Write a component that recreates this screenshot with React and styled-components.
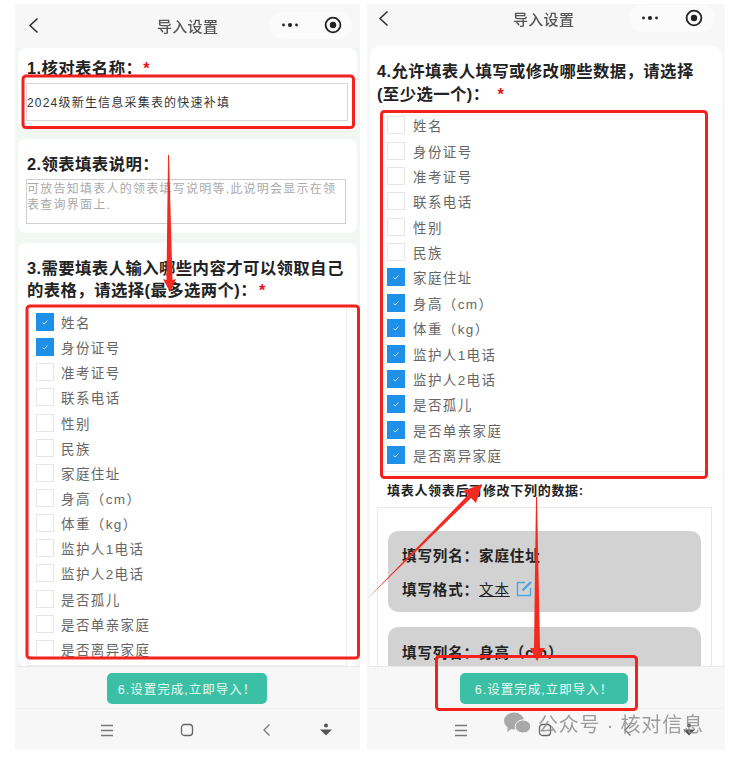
import React from 'react';
import styled, { createGlobalStyle } from 'styled-components';

const ALL_FIELDS = ['姓名', '身份证号', '准考证号', '联系电话', '性别', '民族', '家庭住址', '身高（cm）', '体重（kg）', '监护人1电话', '监护人2电话', '是否孤儿', '是否单亲家庭', '是否离异家庭'];

const Fields = ({ checked, rowH, indent, gap }) => (
  <>
    {ALL_FIELDS.map((name, i) => (
      <FieldRow key={name} $h={rowH} $indent={indent} $gap={gap}>
        <Box $on={checked.includes(i)}>
          {checked.includes(i) && (
            <svg width="8" height="8" viewBox="0 0 8 8" fill="none" stroke="#cfe8fb" strokeWidth="1">
              <path d="M1.5 4.5 L3.2 6 L6.5 2.5" />
            </svg>
          )}
        </Box>
        <FieldName>{name}</FieldName>
      </FieldRow>
    ))}
  </>
);

const TopBar = ({ $compact }) => (
  <Nav $compact={$compact}>
    <svg width="11" height="17" viewBox="0 0 11 17" fill="none" stroke="#333" strokeWidth="1.6">
      <path d="M9.5 1.5 L2 8.5 L9.5 15.5" />
    </svg>
    <NavTitle $compact={$compact}>导入设置</NavTitle>
    <Capsule $compact={$compact}>
      <svg width="18" height="6" viewBox="0 0 18 6" fill="#222">
        <circle cx="2.5" cy="3" r="1.4" />
        <circle cx="9" cy="3" r="2.1" />
        <circle cx="15.5" cy="3" r="1.4" />
      </svg>
      <svg width="18" height="18" viewBox="0 0 18 18">
        <circle cx="9" cy="9" r="7.4" fill="none" stroke="#222" strokeWidth="1.8" />
        <circle cx="9" cy="9" r="3.2" fill="#222" />
      </svg>
    </Capsule>
  </Nav>
);

const BottomBar = ({ $cols, $pad }) => (
  <Footer>
    <SubmitWrap $w={$pad === 'r' ? 168 : 160} $ml={$pad === 'r' ? 93 : 92}>
      <Submit>6.设置完成,立即导入！</Submit>
    </SubmitWrap>
    <SysBar $cols={$cols}>
      <svg width="14" height="13" viewBox="0 0 14 13" stroke="#777" strokeWidth="1.3">
        <path d="M1 1.5 H13 M1 6.5 H13 M1 11.5 H13" />
      </svg>
      <svg width="14" height="14" viewBox="0 0 14 14" fill="none" stroke="#666" strokeWidth="1.3">
        <rect x="1.5" y="1.5" width="11" height="11" rx="3" />
      </svg>
      <svg width="9" height="14" viewBox="0 0 9 14" fill="none" stroke="#777" strokeWidth="1.3">
        <path d="M7.5 1.5 L2 7 L7.5 12.5" />
      </svg>
      <svg width="14" height="14" viewBox="0 0 14 14" fill="#555">
        <circle cx="7" cy="2.6" r="2" />
        <path d="M1 6.5 H13 L7 12.5 Z" />
      </svg>
    </SysBar>
  </Footer>
);

const App = () => (
  <Page>
    <GlobalStyle />
    <Phone $w={345}>
      <TopBar />
      <Body $tint>
        <Card $pad="9px 9px 7px" $mb={11}>
          <Title>1.核对表名称：<Star $ml={1}>*</Star></Title>
          <NameInput>2024级新生信息采集表的快速补填</NameInput>
        </Card>
        <Card $pad="14px 9px 9px" $mb={10}>
          <Title>2.领表填表说明：</Title>
          <Notes>可放告知填表人的领表填写说明等,此说明会显示在领表查询界面上.</Notes>
        </Card>
        <Card $pad="14px 9px 0">
          <Title>3.需要填表人输入哪些内容才可以领取自己<br />的表格，请选择(最多选两个)：<Star $ml={2}>*</Star></Title>
          <FieldList $top={4} $padTop={3.5}>
            <Fields checked={[0, 1]} rowH={25.15} indent={8} gap={7} />
          </FieldList>
        </Card>
      </Body>
      <BottomBar $cols="99px 80px 76.5px 62.5px" />
    </Phone>

    <Phone $w={358} $ml={7}>
      <TopBar $compact />
      <Body>
        <WideCard>
          <Title $lh={23}>4.允许填表人填写或修改哪些数据，请选择<br />(至少选一个)：<Star $ml={8}>*</Star></Title>
          <FieldList $left={4} $width={326} $top={4} $padTop={1.5}>
            <Fields checked={[6, 7, 8, 9, 10, 11, 12, 13]} rowH={25.38} indent={5} gap={8} />
          </FieldList>
          <SubTitle>填表人领表后可修改下列的数据:</SubTitle>
          <EditBox>
            <ColumnCard>
              <ColumnLine>填写列名：家庭住址</ColumnLine>
              <ColumnLine>
                填写格式：<FormatLink>文本</FormatLink>
                <svg width="17" height="17" viewBox="0 0 17 17" fill="none" stroke="#4ba6dc" strokeWidth="1.4">
                  <path d="M9 2.5 H1.5 V15.5 H14.5 V8" />
                  <path d="M6.5 10.5 L15 2" strokeWidth="2.4" />
                </svg>
              </ColumnLine>
            </ColumnCard>
            <ColumnCard>
              <ColumnLine>填写列名：身高（cm）</ColumnLine>
            </ColumnCard>
          </EditBox>
        </WideCard>
      </Body>
      <BottomBar $cols="101px 84px 79.5px 64.5px" $pad="r" />
    </Phone>

    <Annotations width="734" height="758" viewBox="0 0 734 758" fill="none">
      <g stroke="#f4211c" strokeWidth="3">
        <rect x="23" y="76" width="330.5" height="51.5" rx="3" />
        <rect x="27" y="306" width="331.5" height="352" rx="3" />
        <rect x="381.5" y="111.5" width="325" height="366" rx="3" />
        <rect x="436.5" y="656.5" width="200" height="53" rx="3" />
      </g>
      <g fill="#f4291f">
        <path d="M168 155 L169 155 L172.5 280 L176 279 L170 292 L163 279 L166.5 280 Z" />
        <path d="M367 599 L468 495 L463 491 L482 484 L476 503 L471 498 Z" />
        <path d="M536 497 L537 497 L540 648 L545 648 L537 661 L530 648 L534 648 Z" />
      </g>
    </Annotations>

    <Watermark>
      <svg width="27" height="23" viewBox="0 0 27 23" fill="#9a9a9a">
        <ellipse cx="10" cy="9" rx="10" ry="8.5" />
        <path d="M4 14 L3 20 L9 16 Z" />
        <ellipse cx="19" cy="14.5" rx="7.8" ry="6.6" stroke="#fff" strokeWidth="1" />
      </svg>
      <WatermarkText>公众号 · 核对信息</WatermarkText>
    </Watermark>
  </Page>
);

const GlobalStyle = createGlobalStyle`
  html, body {
    margin: 0;
    padding: 0;
    background: #fff;
  }
  body {
    font-family: "Liberation Sans", "Noto Sans CJK SC", sans-serif;
  }
`;

const Page = styled.div`
  position: relative;
  display: flex;
  width: 734px;
  height: 758px;
  padding: 4px 0 8px 15px;
  box-sizing: border-box;
  overflow: hidden;
  filter: blur(0.5px);
`;

const Phone = styled.div`
  display: flex;
  flex-direction: column;
  width: ${p => p.$w}px;
  margin-left: ${p => p.$ml || 0}px;
  background: #f7f7f7;
  overflow: hidden;
`;

const Nav = styled.div`
  position: relative;
  display: flex;
  align-items: center;
  flex: none;
  height: ${p => (p.$compact ? 42 : 44)}px;
  padding: ${p => (p.$compact ? '0 0 14px 11px' : '0 0 2px 13px')};
  box-sizing: border-box;
  background: #f7f7f7;
`;

const NavTitle = styled.div`
  flex: 1;
  margin-left: ${p => (p.$compact ? 124 : 118)}px;
  font-size: 15px;
  font-weight: 500;
  color: #555;
  letter-spacing: 0.3px;
`;

const Capsule = styled.div`
  display: flex;
  align-items: center;
  gap: ${p => (p.$compact ? 26 : 25)}px;
  width: ${p => (p.$compact ? 86 : 83)}px;
  height: 27px;
  padding-left: 12px;
  margin-right: ${p => (p.$compact ? 10 : 8)}px;
  box-sizing: border-box;
  border-radius: 14px;
  background: #fbfbfb;
`;

const Body = styled.div`
  flex: 1;
  min-height: 0;
  padding: 0 3px;
  overflow: hidden;
  background: ${p => (p.$tint ? '#f1f7f3' : '#f7f7f7')};
`;

const Card = styled.div`
  padding: ${p => p.$pad};
  margin-bottom: ${p => p.$mb || 0}px;
  border-radius: 8px;
  background: #fff;
`;

const WideCard = styled.div`
  padding: 14px 7px 0;
  border-radius: 10px;
  background: #fff;
`;

const Title = styled.div`
  font-size: 16.4px;
  font-weight: 700;
  line-height: ${p => p.$lh || 22}px;
  letter-spacing: 0.4px;
  white-space: nowrap;
  color: #222;
`;

const Star = styled.span`
  margin-left: ${p => p.$ml}px;
  color: #e8141c;
`;

const NameInput = styled.div`
  display: flex;
  align-items: center;
  width: 322px;
  height: 38px;
  margin: 4px 0 0 -1px;
  padding-bottom: 2px;
  box-sizing: border-box;
  border: 1px solid #d8d8d8;
  font-size: 12px;
  letter-spacing: 1.2px;
  color: #333;
`;

const Notes = styled.div`
  width: 320px;
  height: 45px;
  margin: 4px 0 0 -1px;
  box-sizing: border-box;
  border: 1px solid #cfcfcf;
  padding-top: 1px;
  font-size: 12px;
  line-height: 16px;
  letter-spacing: 1.25px;
  color: #aaa;
`;

const FieldList = styled.div`
  width: ${p => p.$width || 320}px;
  margin: ${p => p.$top}px 0 0 ${p => p.$left || 0}px;
  padding: ${p => p.$padTop}px 0 3.5px;
  box-sizing: border-box;
  border: 1px solid #eee;
`;

const FieldRow = styled.div`
  display: flex;
  align-items: center;
  gap: ${p => p.$gap}px;
  height: ${p => p.$h}px;
  padding-left: ${p => p.$indent}px;
`;

const Box = styled.div`
  display: flex;
  align-items: center;
  justify-content: center;
  width: 18px;
  height: 18px;
  box-sizing: border-box;
  border: 1px solid ${p => (p.$on ? '#1e90e8' : '#e6e6e6')};
  background: ${p => (p.$on ? '#1e90e8' : '#fff')};
`;

const FieldName = styled.span`
  font-size: 13.5px;
  letter-spacing: 1.4px;
  color: #666;
`;

const SubTitle = styled.div`
  margin: 10px 0 7px 10px;
  font-size: 13px;
  font-weight: 700;
  line-height: 18px;
  letter-spacing: 0.7px;
  color: #222;
`;

const EditBox = styled.div`
  display: flex;
  flex-direction: column;
  gap: 15px;
  width: 335px;
  padding: 23px 10px 0;
  box-sizing: border-box;
  border: 1px solid #e8e8e8;
`;

const ColumnCard = styled.div`
  display: flex;
  flex-direction: column;
  gap: 13px;
  height: 81px;
  padding: 13px 14px;
  box-sizing: border-box;
  border-radius: 10px;
  background: #d2d2d2;
`;

const ColumnLine = styled.div`
  display: flex;
  align-items: center;
  height: 22px;
  font-size: 14.5px;
  font-weight: 700;
  letter-spacing: 0.9px;
  color: #222;
`;

const FormatLink = styled.span`
  margin-right: 6px;
  font-weight: 400;
  text-decoration: underline;
`;

const Footer = styled.div`
  flex: none;
  height: 84px;
  padding-top: 6px;
  box-sizing: border-box;
  border-top: 1px solid #e9e9e9;
  background: #f7f7f7;
`;

const SubmitWrap = styled.div`
  width: ${p => p.$w}px;
  margin-left: ${p => p.$ml}px;
`;

const Submit = styled.div`
  display: flex;
  align-items: center;
  justify-content: center;
  height: 31px;
  border-radius: 5px;
  background: #3cc0a5;
  font-size: 12.5px;
  letter-spacing: 1px;
  color: #e8f8f4;
`;

const SysBar = styled.div`
  display: grid;
  grid-template-columns: ${p => p.$cols};
  align-items: center;
  justify-items: end;
  height: 42px;
  margin-top: 4px;
  border-top: 1px solid #efefef;
`;

const Annotations = styled.svg`
  position: absolute;
  top: 0;
  left: 0;
  pointer-events: none;
`;

const Watermark = styled.div`
  position: absolute;
  left: 504px;
  top: 709px;
  display: flex;
  align-items: center;
  gap: 7px;
  opacity: 0.85;
`;

const WatermarkText = styled.span`
  font-size: 20px;
  letter-spacing: 0.8px;
  white-space: nowrap;
  color: #8e8e8e;
`;

export default App;
